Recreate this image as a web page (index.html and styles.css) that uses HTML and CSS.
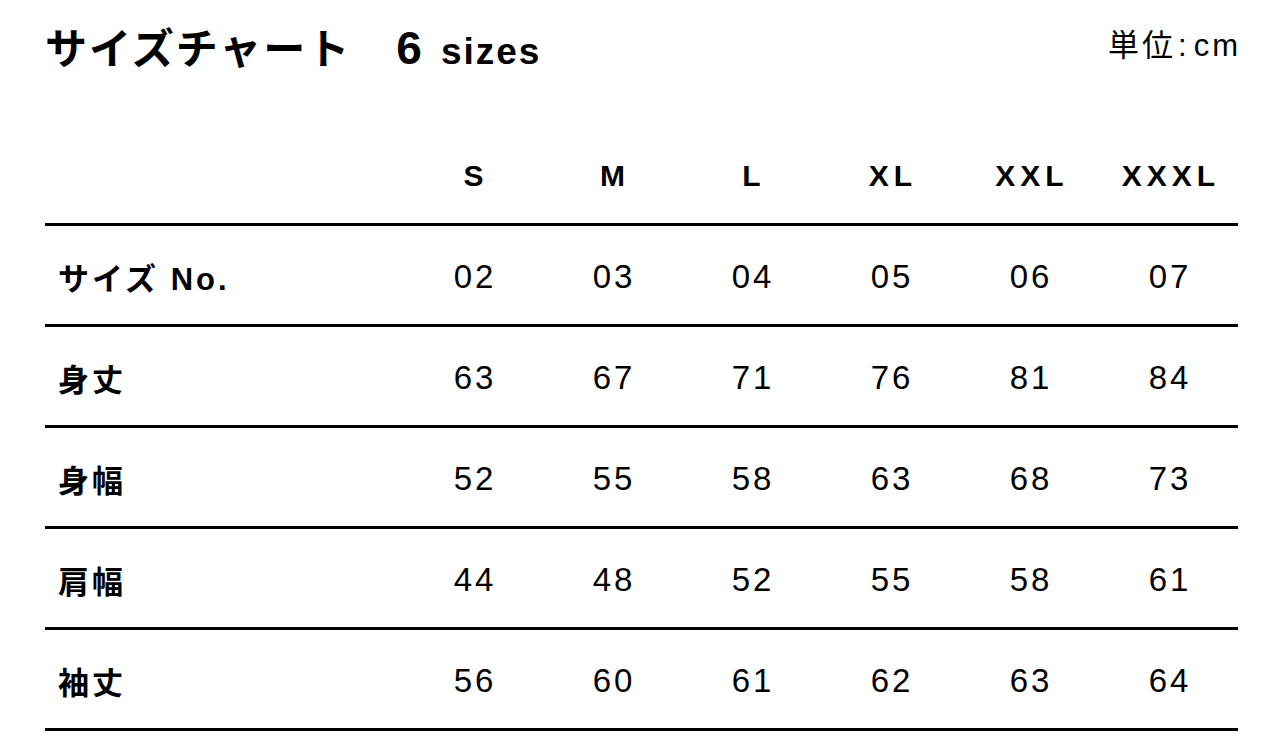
FILE: index.html
```html
<!DOCTYPE html>
<html lang="ja">
<head>
<meta charset="utf-8">
<title>サイズチャート</title>
<link rel="stylesheet" href="styles.css">
</head>
<body>
<div class="page">
  <header class="head">
    <h1 class="title"><span class="title-ja">サイズチャート</span><span class="title-num">6</span><span class="title-unit">sizes</span></h1>
    <div class="unit">単位<span class="colon">:</span>cm</div>
  </header>
  <table class="chart">
    <thead>
      <tr>
        <th class="corner"></th>
        <th>S</th><th>M</th><th>L</th><th>XL</th><th>XXL</th><th>XXXL</th>
      </tr>
    </thead>
    <tbody>
      <tr><th class="label">サイズ No.</th><td>02</td><td>03</td><td>04</td><td>05</td><td>06</td><td>07</td></tr>
      <tr><th class="label">身丈</th><td>63</td><td>67</td><td>71</td><td>76</td><td>81</td><td>84</td></tr>
      <tr><th class="label">身幅</th><td>52</td><td>55</td><td>58</td><td>63</td><td>68</td><td>73</td></tr>
      <tr><th class="label">肩幅</th><td>44</td><td>48</td><td>52</td><td>55</td><td>58</td><td>61</td></tr>
      <tr><th class="label">袖丈</th><td>56</td><td>60</td><td>61</td><td>62</td><td>63</td><td>64</td></tr>
    </tbody>
  </table>
</div>
</body>
</html>
```
FILE: styles.css
```css
html, body {
  margin: 0;
  padding: 0;
  background: #fff;
  color: #000;
}
body {
  font-family: "Liberation Sans", "Noto Sans CJK JP", sans-serif;
}
.page {
  padding: 0 46px 0 45px;
}
.head {
  display: flex;
  justify-content: space-between;
  align-items: flex-start;
  height: 121px;
  padding-top: 21px;
  box-sizing: border-box;
}
.title {
  margin: 0;
  font-weight: 700;
  display: flex;
  align-items: baseline;
  line-height: 1.2;
}
.title-ja {
  font-size: 42px;
  letter-spacing: 2px;
  font-family: "Noto Sans CJK JP", sans-serif;
}
.title-num {
  font-size: 46px;
  margin-left: 45px;
}
.title-unit {
  font-size: 37px;
  letter-spacing: 2px;
  margin-left: 19px;
}
.unit {
  font-size: 31px;
  line-height: 1.2;
  letter-spacing: 3px;
  margin-top: 6px;
  margin-right: -3px;
}
.colon {
  margin: 0 4px 0 2px;
}
.chart {
  width: 100%;
  border-collapse: collapse;
  table-layout: fixed;
}
.chart th, .chart td {
  padding: 0;
  text-align: center;
}
.chart thead th {
  height: 94px;
  font-size: 30px;
  font-weight: 700;
  letter-spacing: 5px;
  border-bottom: 3px solid #000;
  vertical-align: middle;
  padding-left: 5px;
  padding-top: 8px;
}
.chart thead th.corner {
  width: 359px;
  padding: 0;
}
.chart tbody tr {
  height: 101px;
  border-bottom: 3px solid #000;
}
.chart tbody td {
  font-size: 33px;
  letter-spacing: 3px;
  padding-left: 3px;
  padding-top: 4px;
  vertical-align: middle;
}
.chart .label {
  text-align: left;
  padding-left: 13px;
  padding-top: 2px;
  font-size: 31px;
  font-weight: 700;
  letter-spacing: 3px;
}
```
